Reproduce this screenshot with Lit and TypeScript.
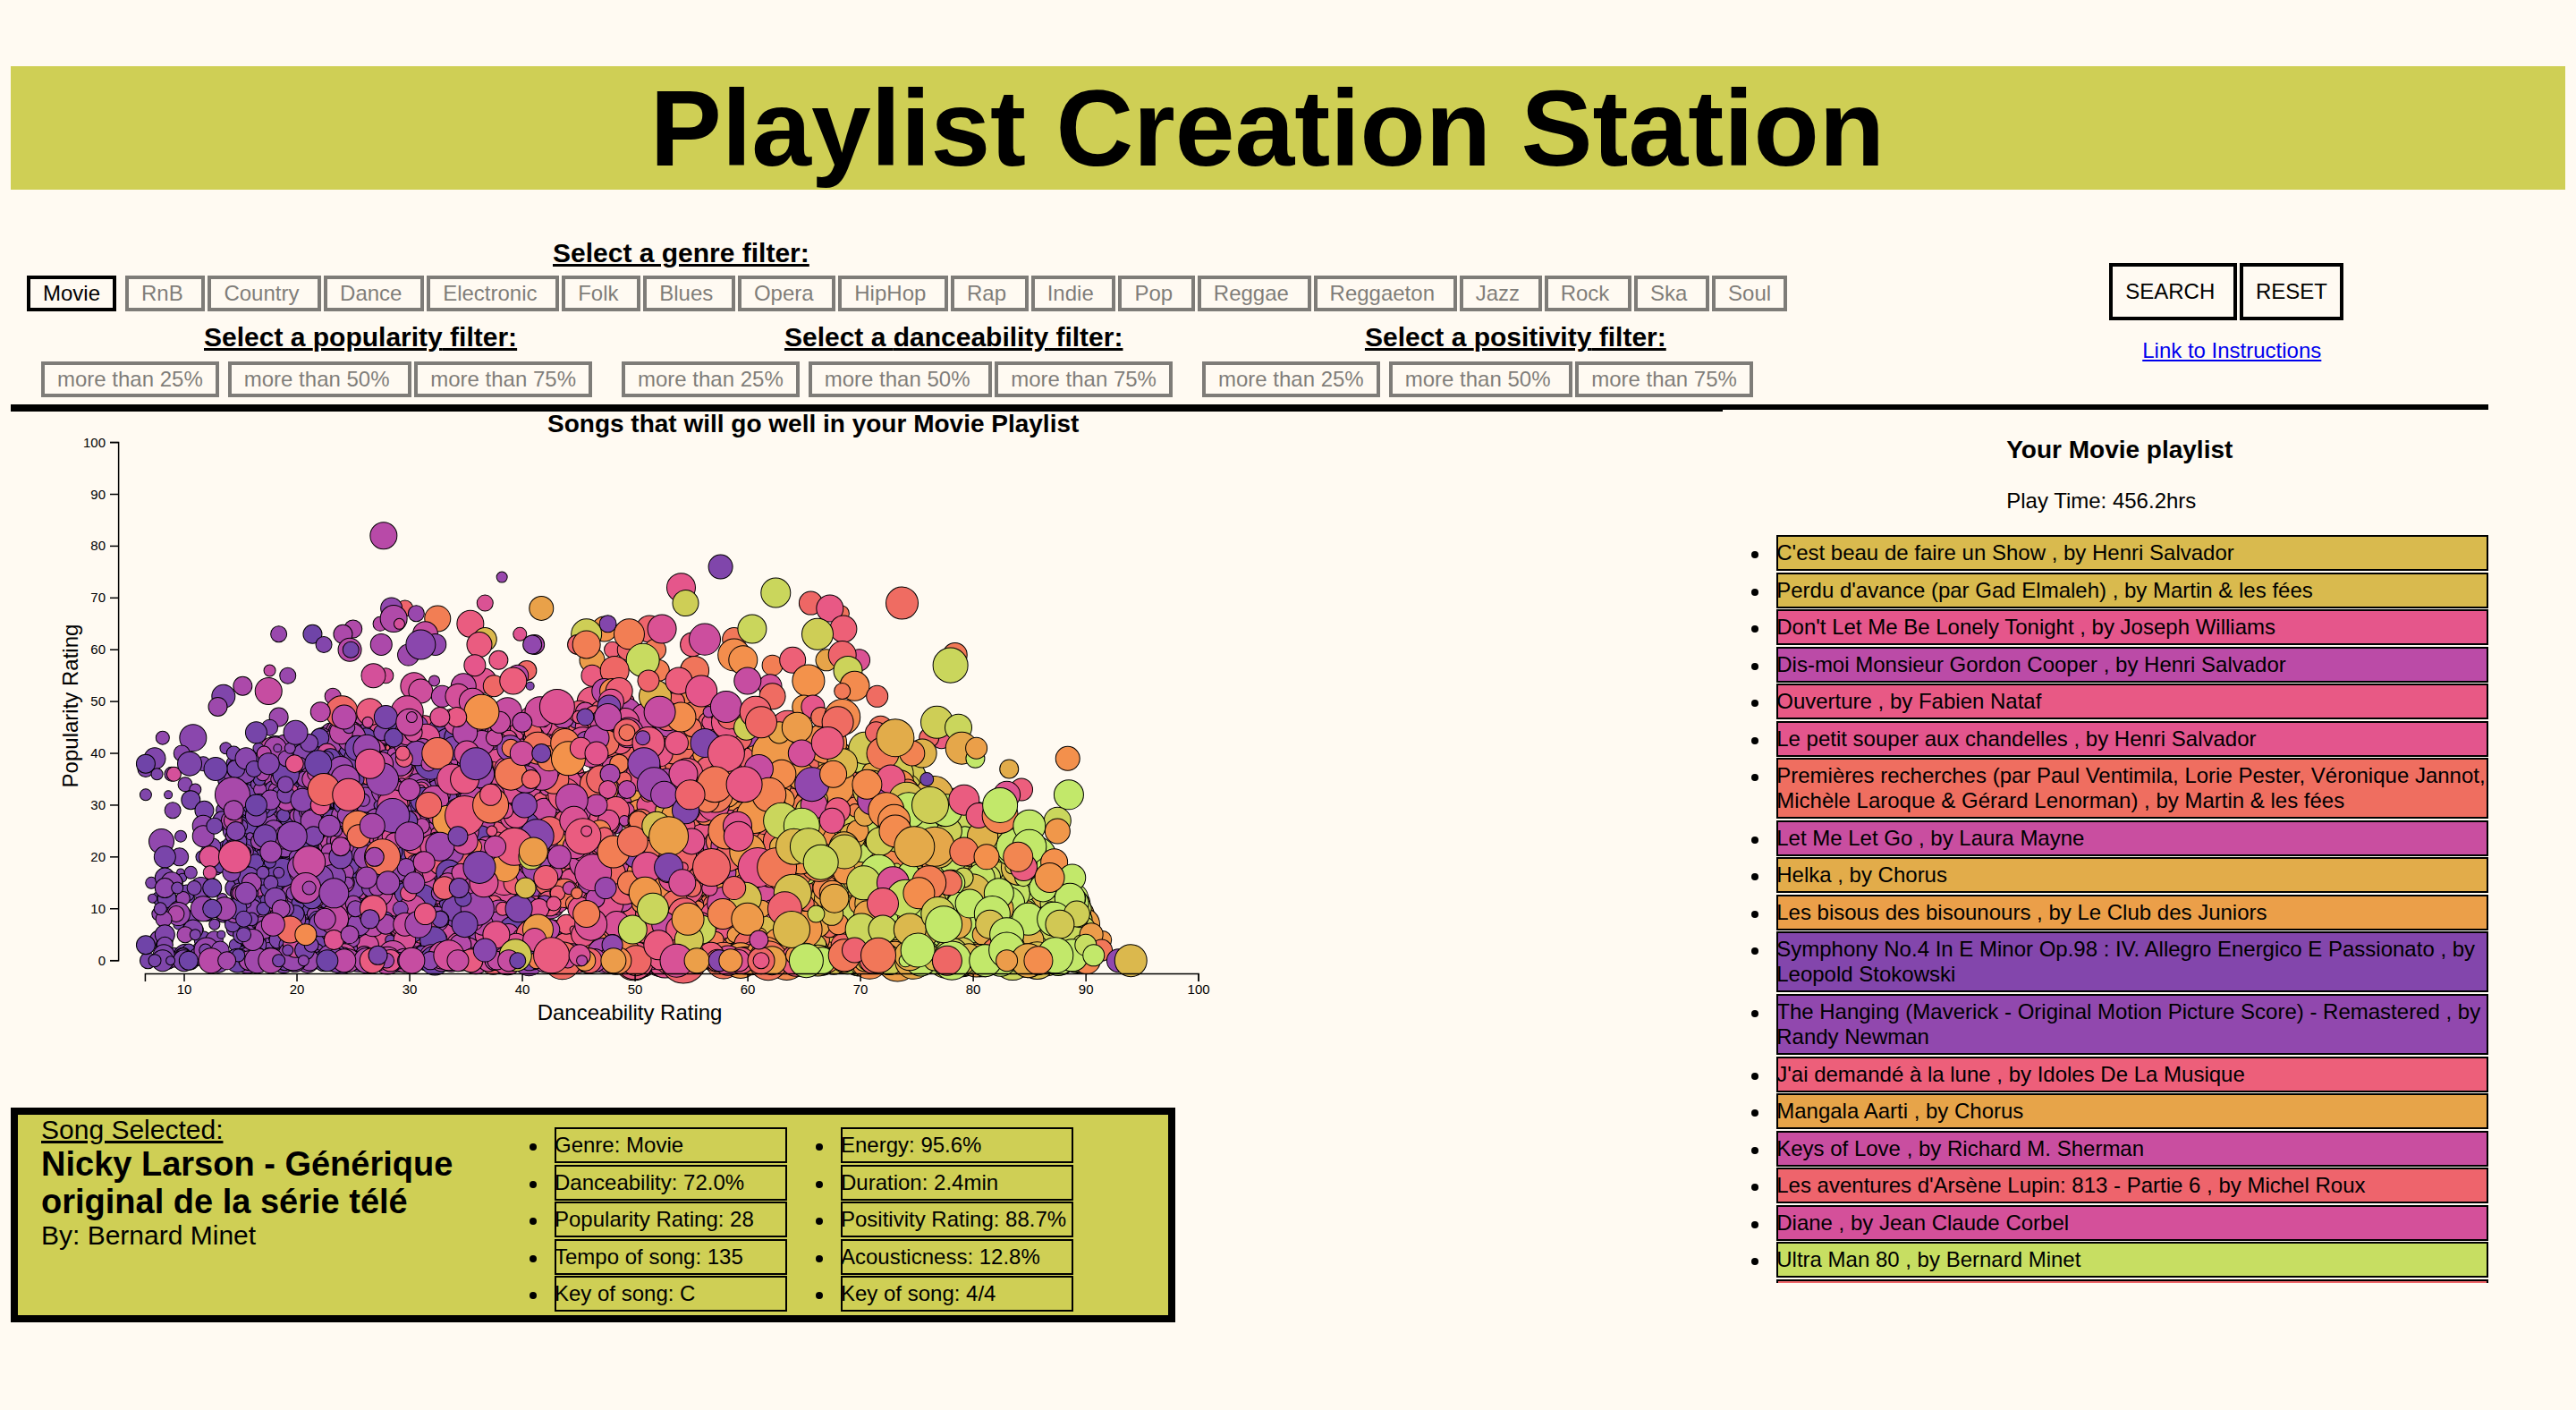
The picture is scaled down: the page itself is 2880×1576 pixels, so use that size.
import { LitElement, html, svg, css } from "lit";
import { customElement, property, state } from "lit/decorators.js";
import { classMap } from "lit/directives/class-map.js";
import { styleMap } from "lit/directives/style-map.js";

type Song = { title: string; tone: number };
type Dot = [dance: number, popularity: number, radius: number, tone: number];

const GENRES = [
  "Movie", "RnB", "Country", "Dance", "Electronic", "Folk", "Blues", "Opera", "HipHop",
  "Rap", "Indie", "Pop", "Reggae", "Reggaeton", "Jazz", "Rock", "Ska", "Soul",
];
const LEVELS = [25, 50, 75];
const RATINGS = ["popularity", "danceability", "positivity"];

const SONGS: Song[] = [
  { title: "C'est beau de faire un Show , by Henri Salvador", tone: 0.83 },
  { title: "Perdu d'avance (par Gad Elmaleh) , by Martin & les fées", tone: 0.83 },
  { title: "Don't Let Me Be Lonely Tonight , by Joseph Williams", tone: 0.38 },
  { title: "Dis-moi Monsieur Gordon Cooper , by Henri Salvador", tone: 0.21 },
  { title: "Ouverture , by Fabien Nataf", tone: 0.4 },
  { title: "Le petit souper aux chandelles , by Henri Salvador", tone: 0.37 },
  { title: "Premières recherches (par Paul Ventimila, Lorie Pester, Véronique Jannot, Michèle Laroque & Gérard Lenorman) , by Martin & les fées", tone: 0.53 },
  { title: "Let Me Let Go , by Laura Mayne", tone: 0.26 },
  { title: "Helka , by Chorus", tone: 0.78 },
  { title: "Les bisous des bisounours , by Le Club des Juniors", tone: 0.73 },
  { title: "Symphony No.4 In E Minor Op.98 : IV. Allegro Energico E Passionato , by Leopold Stokowski", tone: 0.06 },
  { title: "The Hanging (Maverick - Original Motion Picture Score) - Remastered , by Randy Newman", tone: 0.1 },
  { title: "J'ai demandé à la lune , by Idoles De La Musique", tone: 0.44 },
  { title: "Mangala Aarti , by Chorus", tone: 0.75 },
  { title: "Keys of Love , by Richard M. Sherman", tone: 0.26 },
  { title: "Les aventures d'Arsène Lupin: 813 - Partie 6 , by Michel Roux", tone: 0.48 },
  { title: "Diane , by Jean Claude Corbel", tone: 0.3 },
  { title: "Ultra Man 80 , by Bernard Minet", tone: 0.96 },
  { title: "\u00a0", tone: 0.49 },
];

const FACTS_LEFT = ["Genre: Movie", "Danceability: 72.0%", "Popularity Rating: 28", "Tempo of song: 135", "Key of song: C"];
const FACTS_RIGHT = ["Energy: 95.6%", "Duration: 2.4min", "Positivity Rating: 88.7%", "Acousticness: 12.8%", "Key of song: 4/4"];

// Colour ramp for the positivity score, from purple through pink and orange to lime.
const RAMP: [number, number, number, number][] = [
  [0, 111, 68, 168],
  [0.1, 145, 72, 174],
  [0.2, 184, 74, 168],
  [0.3, 212, 80, 154],
  [0.38, 229, 86, 139],
  [0.44, 237, 95, 122],
  [0.5, 238, 103, 101],
  [0.6, 242, 126, 84],
  [0.68, 243, 146, 75],
  [0.74, 233, 161, 73],
  [0.8, 222, 178, 75],
  [0.9, 206, 206, 86],
  [1, 194, 232, 106],
];

function toneColor(t: number): string {
  const v = Math.min(1, Math.max(0, t));
  let i = 1;
  while (i < RAMP.length - 1 && RAMP[i][0] < v) i++;
  const a = RAMP[i - 1];
  const b = RAMP[i];
  const k = (v - a[0]) / (b[0] - a[0]);
  const mix = (n: number) => Math.round(a[n] + (b[n] - a[n]) * k);
  return `rgb(${mix(1)},${mix(2)},${mix(3)})`;
}

function curve(points: [number, number][], x: number): number {
  if (x <= points[0][0]) return points[0][1];
  for (let i = 1; i < points.length; i++) {
    const [x1, y1] = points[i];
    const [x0, y0] = points[i - 1];
    if (x <= x1) return y0 + ((y1 - y0) * (x - x0)) / (x1 - x0);
  }
  return points[points.length - 1][1];
}

const CEILING: [number, number][] = [
  [6.5, 8], [9, 18], [12, 22], [13.4, 28], [14, 38], [16, 40], [20, 43], [25, 45], [30, 46], [35, 47], [42, 46], [47, 51],
  [55, 50], [60, 47], [65, 44], [70, 40], [75, 34], [80, 29], [84, 23], [88, 16], [90, 8], [91, 2],
];
const MEAN_TONE: [number, number][] = [
  [6, 0.04], [14, 0.05], [20, 0.09], [28, 0.16], [36, 0.27], [44, 0.36], [52, 0.42], [60, 0.54], [66, 0.7], [74, 0.84], [82, 0.94], [90, 0.97],
];
const MEAN_RADIUS: [number, number][] = [
  [6, 8], [12, 9], [16, 10], [22, 12], [30, 13], [40, 14], [55, 16], [70, 17], [85, 17], [91, 13],
];

// The bulk of the catalogue: a repeatable cloud of songs below the popularity ceiling.
function crowd(): Dot[] {
  let seed = 20117;
  const rnd = () => {
    seed = (seed * 1664525 + 1013904223) >>> 0;
    return seed / 4294967296;
  };
  const bell = () => (rnd() + rnd() + rnd() + rnd() - 2) * 0.9;
  const dots: Dot[] = [];
  const add = (d: number, p: number) => {
    const spread = d < 14 ? 0.08 : d < 26 ? 0.16 : 0.26;
    const tone = curve(MEAN_TONE, d) + bell() * spread;
    const radius = Math.max(4, curve(MEAN_RADIUS, d) * (0.85 + bell() * 0.5));
    dots.push([d, p, radius, Math.min(1, Math.max(0, tone))]);
  };
  for (let i = 0; i < 60; i++) {
    const d = 7.4 + rnd() * 6.4;
    add(d, Math.round(rnd() * curve(CEILING, d)));
  }
  for (let i = 0; i < 3300; i++) {
    const d = i % 5 === 0 ? 14 + rnd() * 22 : 13.8 + rnd() * 76;
    const top = curve(CEILING, d);
    add(d, Math.round(Math.pow(rnd(), 0.95) * top));
  }
  for (let i = 0; i < 380; i++) {
    add(8 + rnd() * 82, rnd() < 0.8 ? 0 : 1);
  }
  return dots;
}

const STANDOUTS: Dot[] = [
  [16.3, 28, 12, 0.06], [17.1, 24, 13, 0.03], [20.4, 31, 13, 0.08], [21.2, 27, 12, 0.13], [21.4, 24, 11, 0.05],
  [22, 30, 11, 0.38], [24.3, 28, 10, 0.13], [18.9, 34, 9, 0.06], [21, 42, 10, 0.05], [23.8, 37, 14, 0.12],
  [25.3, 41, 14, 0.03], [29.3, 40, 8, 0.42], [14.5, 37, 10, 0.02], [18.2, 41, 4.5, 0.1], [19.3, 41, 6, 0.09],
  [16.5, 41, 6, 0.04], [17, 40, 8, 0.2], [14.1, 17, 10, 0.07], [15.9, 15, 11, 0.15], [16.9, 17, 7, 0.04],
  [17.6, 15, 8, 0.04], [18, 12, 12, 0.07], [18.3, 17, 6, 0.04], [20.2, 17, 12, 0.16], [20.2, 18, 14, 0.14],
  [29.8, 13, 9, 0.38], [29.6, 18, 10, 0.12], [26, 20, 13, 0.13], [25.3, 26, 17, 0.6], [25.4, 24, 13, 0.55],
  [13.5, 10, 13, 0.15], [11.4, 14, 12, 0.06], [9.4, 9, 13, 0.12], [9.2, 9, 9, 0.18], [8.1, 8, 9, 0.12],
  [7.8, 10, 7, 0.05], [7.1, 12, 5, 0.06], [9, 15, 10, 0.2], [8.2, 5, 11, 0.05], [8.2, 3, 9, 0.06],
  [10.7, 6, 11, 0.07], [10, 5, 9, 0.15], [10.9, 5, 6, 0.05], [11.9, 2, 14, 0.12], [13.1, 2, 10, 0.1],
  [11.8, 2, 7, 0.04], [8.1, 1, 12, 0.05], [12.6, 7, 6, 0.06], [13.2, 5, 4.5, 0.04], [9.9, 0, 12, 0.04],
  [12.3, 0, 14, 0.2], [16.4, 0, 14, 0.14], [16, 4, 12, 0.14], [15.2, 5, 8, 0.04], [19.6, 1, 17, 0.12],
  [19.8, 3, 14, 0.28], [20.6, 2, 11, 0.03], [19.1, 2, 6, 0.05], [21.2, 3, 8, 0.06], [23.2, 4, 11, 0.35],
  [24.6, 5, 10, 0.15], [25.1, 10, 9, 0.1], [27.8, 7, 11, 0.16], [29.1, 10, 8.5, 0.07], [29.5, 7, 13, 0.25],
  [27.6, 82, 15, 0.2], [38.1, 74, 6, 0.12], [36.6, 69, 9, 0.33], [41.6, 68, 13.5, 0.74], [29.5, 68, 9, 0.48],
  [28.3, 68, 12, 0.1], [30.5, 67, 9, 0.12], [27.3, 65, 8, 0.2], [28.5, 66, 15, 0.18], [29, 65, 6, 0.3],
  [32.4, 66, 14.5, 0.6], [35.3, 65, 15, 0.42], [24.9, 64, 10, 0.18], [31.3, 63, 14, 0.25], [18.3, 63, 9, 0.12],
  [21.3, 63, 10.5, 0], [24, 63, 10.5, 0.17], [39.7, 63, 7.5, 0.35], [36.6, 62, 13, 0.82], [22.3, 61, 9, 0.06],
  [24.6, 60, 13, 0.2], [24.7, 60, 9, 0.02], [27.4, 61, 12, 0.17], [32.2, 61, 12, 0.1], [29.8, 59, 12, 0.13],
  [30.9, 61, 16.5, 0.08], [36.1, 61, 14, 0.42], [41, 61, 11, 0.17], [40.8, 61, 10.5, 0.1], [37.8, 58, 10.5, 0.4],
  [36.5, 54, 14, 0.35], [35.7, 57, 12, 0.38], [17.5, 56, 6.5, 0.23], [40.3, 56, 11, 0.5], [39.5, 55, 12, 0.2],
  [37.4, 53, 12, 0.5], [39.1, 54, 15, 0.43], [19.1, 55, 9, 0.12], [27.8, 55, 8.5, 0.3], [26.7, 55, 13.5, 0.3],
  [15.1, 53, 10.5, 0.17], [17.4, 52, 15, 0.25], [13.4, 51, 13, 0.05], [12.9, 49, 10.5, 0.13], [30.3, 53, 15, 0.3],
  [30.9, 52, 13.5, 0.28], [32.1, 54, 6, 0.16], [32.8, 51, 12, 0.2], [34.7, 53, 14, 0.23], [34.2, 51, 14, 0.3],
  [35.5, 50, 15, 0.28], [40.6, 53, 4.5, 0.05], [23.1, 51, 9, 0.2], [38.6, 48, 16, 0.25], [41.5, 48, 17, 0.28],
  [43, 49, 19.5, 0.34], [37.9, 46, 12, 0.25], [36.3, 48, 19.5, 0.68], [18.3, 47, 10.5, 0.13], [23.9, 48, 18, 0.5],
  [22, 48, 11, 0.2], [24.1, 47, 13.5, 0.2], [26.4, 48, 15, 0.42], [29.7, 48, 18, 0.3], [27.8, 47, 13, 0.03],
  [26.2, 46, 6, 0.3], [29.9, 46, 15, 0.25], [30.1, 47, 6, 0.22], [34.1, 47, 11, 0.4], [32.6, 47, 11, 0.35],
  [45.5, 47, 9.5, 0.02], [39.9, 46, 11, 0.2], [17.5, 45, 9, 0.05], [16.3, 44, 12, 0.02], [19.8, 44, 13.5, 0.06],
  [8, 43, 7.5, 0.1], [10.7, 43, 15, 0.08], [13.6, 41, 6.5, 0.06], [14.3, 40, 8, 0.03], [15.4, 39, 12, 0.08],
  [7.3, 39, 12, 0.05], [6.5, 37, 9, 0.05], [6.5, 38, 10.5, 0], [7.5, 36, 6.5, 0.04], [8.8, 36, 8, 0.1],
  [9, 36, 8, 0.3], [9.7, 40, 9, 0.08], [11.6, 38, 8, 0.05], [10.4, 38, 13.5, 0.04], [12.7, 37, 13, 0.01],
  [6.5, 32, 6.5, 0.05], [8.5, 32, 4.5, 0.06], [10, 34, 8, 0.07], [10.9, 33, 6.5, 0.08], [10.5, 31, 10.5, 0.02],
  [8.9, 29, 9, 0.07], [11.7, 29, 10.5, 0.03], [16.1, 37, 9, 0.02], [17.4, 38, 12, 0.06], [14.2, 32, 19.5, 0.16],
  [16.3, 30, 12, 0], [14.3, 29, 11, 0.15], [7.9, 23, 14, 0.1], [9.6, 24, 6.5, 0.05], [11.6, 26, 12, 0.1],
  [11.6, 24, 12, 0.12], [12.6, 26, 9, 0.02], [14.5, 25, 10.5, 0.06], [9.5, 20, 10, 0.06], [8.2, 20, 12, 0.03],
  [12.2, 20, 12, 0.35], [14.4, 20, 18, 0.38], [12.2, 17, 7.5, 0.33], [10.5, 17, 7, 0.06], [7, 15, 6.5, 0.05],
  [8.2, 16, 11, 0.04], [8.8, 15, 12, 0.1], [8.2, 14, 11, 0.1], [9.3, 14, 6.5, 0.04], [10.8, 14, 8, 0.04],
  [19.7, 38, 10, 0.38], [21.8, 38, 15, 0], [26.1, 41, 15, 0.12], [24.2, 35, 16, 0.15], [27.5, 35, 18, 0.12],
  [26.4, 38, 16.5, 0.38], [22.3, 33, 18, 0.5], [24.5, 32, 18, 0.45], [29.9, 33, 12, 0.2], [32.4, 40, 17.5, 0.55],
  [33.7, 35, 17, 0.35], [34.8, 35, 16, 0.4], [35.8, 38, 18, 0.05], [38.9, 36, 18, 0.58], [40.7, 35, 10.5, 0.48],
  [38.9, 41, 10, 0.58], [41.3, 41, 18, 0.55], [42.3, 39, 14, 0.6], [39.9, 40, 13.5, 0.28], [43.7, 42, 16, 0.6],
  [44, 39, 19, 0.68], [41.6, 40, 10.5, 0.03], [46.5, 43, 14, 0.2], [45.1, 41, 12, 0.4], [46.5, 40, 13, 0.37],
  [48.5, 38, 10.5, 0.6], [47.7, 36, 11, 0.16], [47.5, 33, 10, 0.33], [49.2, 33, 10, 0.2], [46.5, 30, 12, 0.23],
  [28.4, 28, 19, 0.1], [26.6, 26, 14, 0.16], [33.3, 27, 17, 0.7], [34.8, 28, 22, 0.42], [31.6, 30, 14.5, 0.5],
  [37.1, 30, 20, 0.58], [37.1, 32, 12, 0.42], [40.1, 30, 14, 0.08], [44.3, 31, 18, 0.22], [44.5, 27, 16, 0.33],
  [29.9, 24, 16, 0.15], [19.5, 24, 16.5, 0.1], [22.8, 26, 12, 0.12], [17.6, 21, 12, 0.14], [32.6, 22, 16, 0.14],
  [34.2, 24, 11, 0.04], [38.4, 18, 16, 0.7], [36.5, 15, 16, 0.33], [36.1, 18, 18, 0.06], [41.2, 24, 19, 0.07],
  [39.2, 22, 21, 0.42], [37.5, 22, 12, 0.25], [40.7, 20, 14, 0.9], [40.9, 21, 16, 0.72], [43.2, 20, 13, 0.2],
  [45.3, 24, 20, 0.42], [45.6, 25, 6, 0.38], [46.2, 17, 20.5, 0.28], [48, 21, 18, 0.6], [47.3, 14, 12, 0.12],
  [49.4, 15, 13, 0.6], [27.5, 20, 20, 0.55], [26.8, 20, 10.5, 0.15], [23.8, 20, 13, 0.04], [23.8, 22, 10.5, 0.2],
  [21, 19, 18, 0.26], [20.7, 14, 17, 0.22], [21, 14, 7.5, 0.15], [23.2, 13, 16.5, 0.12], [26.1, 16, 12, 0.14],
  [28, 15, 13, 0.13], [30.3, 15, 12, 0.13], [31.2, 19, 12, 0.23], [34.3, 14, 11, 0.04], [26.7, 10, 15, 0.42],
  [18.5, 10, 10, 0.15], [19.3, 6, 15, 0.52], [20.7, 5, 12, 0.65], [17.8, 7, 13, 0.2], [22.4, 8, 12, 0.18],
  [26.4, 8, 10.5, 0.07], [30.7, 7, 15, 0.15], [31.3, 9, 12, 0.4], [39.6, 10, 15, 0.05], [34.8, 7, 14.5, 0.03],
  [37.6, 5, 15, 0.38], [36.6, 2, 13, 0.08], [40.2, 14, 11.5, 0.83], [42, 16, 13.5, 0.45], [42.7, 11, 8, 0.38],
  [46, 7, 18, 0.32], [45.6, 9, 15, 0.6], [41.3, 6, 17, 0.72], [41, 4, 13, 0.33], [33.4, 1, 17, 0.3],
  [30.1, 0, 14.5, 0.25], [34.2, 0, 12, 0.25], [39.3, 1, 18, 0.88], [38.7, 0, 12, 0.25], [39.5, 0, 9, 0],
  [42.5, 1, 20, 0.42], [45, 1, 12, 0.32], [45.2, 0, 6, 0.2], [26.6, 0, 14, 0.42], [27.1, 1, 10.5, 0.04],
  [24.1, 0, 13, 0.22], [22.6, 0, 12, 0], [20.5, 0, 6, 0.1], [17.6, 0, 14, 0.18], [18.3, 0, 7, 0.03],
  [13.7, 0, 10, 0.15], [10.3, 0, 10.5, 0], [8, 0, 12, 0.05], [8.7, 0, 5, 0.03], [6.7, 0, 9, 0.03],
  [7.3, 0, 7, 0.03], [6.5, 3, 10.5, 0], [11.6, 10, 14, 0.12], [12.4, 10, 10.5, 0], [12.4, 14, 10.5, 0],
  [15.4, 13, 12, 0.1], [15.2, 8, 9, 0.02], [50, 0, 17, 0.5], [48.4, 0, 15, 0.65], [47.9, 3, 11.5, 0.1],
  [48, 0, 14, 0.72],
  [47.2, 64, 14, 0.68], [47.5, 65, 9.5, 0.06], [46.1, 58, 14, 0.72], [46.1, 55, 12, 0.42], [45.6, 63, 17, 0.9],
  [44.8, 61, 11, 0.48], [45.6, 61, 15.5, 0.6], [47.9, 60, 9, 0.45], [49.3, 60, 12, 0.48], [51.2, 64, 15, 0.48],
  [51.7, 60, 12, 0.58], [49.4, 63, 17, 0.6], [52.3, 64, 16, 0.33], [52, 56, 12, 0.6], [51.7, 51, 18, 0.8],
  [50.6, 58, 18.5, 0.95], [48.1, 56, 16, 0.5], [47.2, 52, 14, 0.2], [47.9, 52, 14, 0.65], [48.5, 52, 15, 0.45],
  [47.8, 50, 14, 0.35], [47.6, 49, 13, 0.04], [47.5, 47, 15, 0.22], [51.1, 54, 12, 0.48],
  [54, 72, 16, 0.38], [54.4, 69, 14.5, 0.9], [57.5, 76, 13.5, 0.05], [62.4, 71, 16.5, 0.93], [65.5, 69, 13, 0.5],
  [68.2, 67, 9, 0.55], [67.2, 68, 15, 0.4], [73.6, 69, 18, 0.52], [55, 61, 13.5, 0.43], [56.1, 62, 17.5, 0.27],
  [58.7, 62, 13, 0.57], [60.3, 64, 16, 0.93], [58.7, 59, 18, 0.66], [59.5, 58, 16, 0.67], [68.4, 64, 15, 0.45],
  [66.9, 58, 12, 0.75], [66.1, 63, 17.5, 0.9], [69.8, 58, 12, 0.33], [68.3, 59, 15.5, 0.48], [68.8, 56, 16, 0.92],
  [62.1, 57, 11.5, 0.6], [63.9, 58, 14.5, 0.45], [65.3, 54, 18, 0.68], [69.4, 53, 16.5, 0.65], [68.3, 52, 9, 0.58],
  [71.4, 51, 12, 0.52], [78.3, 59, 13.5, 0.58], [77.9, 57, 19.5, 0.93], [61.9, 53, 13, 0.3], [59.9, 54, 15, 0.25],
  [62.1, 51, 14.5, 0.52], [55.2, 56, 16, 0.56], [53.8, 54, 15, 0.43], [55.8, 52, 17.5, 0.38], [58, 49, 17.5, 0.24],
  [54, 47, 16.5, 0.66], [52.1, 48, 17.5, 0.25], [59.8, 45, 14, 0.9], [60.6, 48, 17.5, 0.47], [61.1, 46, 17.5, 0.5],
  [64.9, 49, 13, 0.7], [65.7, 49, 13, 0.38], [66.4, 47, 11, 0.55], [68.3, 47, 20, 0.65], [67.9, 46, 17.5, 0.52],
  [64.3, 45, 17, 0.72], [64.7, 40, 15, 0.3], [70.3, 41, 18, 0.88], [68.3, 38, 17, 0.82], [67, 42, 18, 0.42],
  [71.7, 45, 13, 0.55], [71.3, 44, 12, 0.5], [77.1, 43, 12, 0.42], [76, 43, 11, 0.5], [76.7, 46, 18, 0.9],
  [78.6, 45, 15, 0.93], [71.9, 40, 18, 0.58], [75.4, 40, 16, 0.8], [74.5, 40, 14, 0.62], [73, 43, 21, 0.78],
  [78.9, 41, 18, 0.76], [80.1, 39, 10.5, 1], [80.2, 41, 12, 0.73], [83.1, 37, 10.5, 0.78], [88.3, 39, 13.5, 0.67],
  [88.4, 32, 16.5, 1], [87.4, 27, 15, 0.93], [87.4, 25, 14, 0.7], [75.8, 35, 7.5, 0], [49.2, 44, 15, 0.48],
  [49.2, 44, 9, 0.55], [51.1, 42, 18, 0.42], [50.6, 43, 8, 0.08], [56.1, 42, 16, 0.05], [58, 40, 20.5, 0.42],
  [53.6, 42, 13, 0.4], [54.2, 36, 16, 0.34], [50.7, 38, 18, 0.1], [51.6, 34, 19, 0.13], [54.4, 29, 15, 0.05],
  [52.5, 32, 15, 0.15], [57, 34, 20, 0.57], [54.8, 32, 16.5, 0.48], [60.9, 37, 16, 0.25], [61.8, 32, 19, 0.62],
  [59.6, 34, 20, 0.4], [65.8, 30, 15, 0.3], [65.6, 34, 19, 0.1], [67.5, 36, 15, 0.65], [71, 31, 17, 0.18],
  [72.6, 35, 16, 0.4], [70.5, 34, 16.5, 0.65], [67.9, 29, 14, 0.42], [67.4, 27, 14, 0.38], [74, 31, 20, 0.85],
  [74.2, 29, 20, 1], [72.2, 29, 20, 0.66], [72.9, 27, 18, 0.66], [77.5, 29, 18, 1], [76.1, 30, 20.5, 0.9],
  [79.1, 31, 17, 0.42], [80.4, 28, 14, 0.42], [84.2, 33, 12.5, 0.43], [82.9, 32, 15, 0.35], [82.3, 28, 20, 0.62],
  [82.3, 30, 19.5, 1], [84.9, 26, 18, 1], [84.9, 22, 19, 1], [58, 25, 20, 0.62], [59.9, 21, 20, 0.72],
  [49.7, 23, 17, 0.55], [51.8, 26, 16, 0.85], [52.9, 24, 22, 0.73], [51, 18, 17, 0.36], [52.9, 18, 16, 0.05],
  [60.8, 18, 22, 0.38], [56.7, 18, 21, 0.49], [59, 26, 16, 0.35], [59.1, 24, 16.5, 0.38], [62.5, 18, 22, 0.58],
  [62.9, 27, 20, 0.93], [64.7, 26, 20, 0.97], [64, 22, 20, 0.82], [65.3, 22, 20.5, 0.9], [68.5, 21, 19, 0.88],
  [66.4, 19, 19.5, 0.94], [73, 25, 18, 0.65], [76.5, 22, 22, 0.76], [74.7, 22, 22.5, 0.77], [79.1, 21, 16, 0.58],
  [81.1, 20, 14, 0.67], [84.4, 18, 15, 0.42], [83.9, 20, 16.5, 0.63], [87.1, 19, 15, 0.67], [88.7, 16, 15, 1],
  [88.5, 12, 17, 1], [86.7, 16, 16.5, 0.69], [82.2, 13, 16.5, 1], [71.5, 17, 20, 1], [70.2, 15, 19, 0.93],
  [72.8, 15, 18, 0.33], [73.9, 12, 21, 0.96], [77.8, 15, 14, 0.55], [76, 15, 19, 0.6], [75.1, 13, 17.5, 0.66],
  [71.9, 11, 17.5, 0.45], [67.6, 12, 16, 0.77], [63.9, 13, 21, 0.85], [63.2, 10, 19, 0.47], [63.8, 6, 20.5, 0.82],
  [59.7, 12, 18, 0.85], [55.8, 6, 16, 0.93], [54.7, 4, 16, 0.88], [57.7, 9, 17, 0.63], [59.9, 8, 18, 0.71],
  [58.7, 14, 13, 0.49], [50.8, 13, 18, 0.7], [54.1, 15, 15, 0.32], [49.7, 6, 16, 0.95], [51.5, 10, 17.5, 0.93],
  [54.6, 8, 18, 0.71], [52, 3, 16.5, 0.42], [53.6, 0, 18.5, 0.32], [55.4, 0, 14, 0.73], [57.4, 0, 12, 0.07],
  [58.4, 0, 13, 0.7], [61.1, 0, 15, 0.5], [61.1, 0, 9, 0.4], [60.9, 4, 10.5, 0.27], [70, 6, 18, 0.93],
  [71.9, 6, 16, 0.92], [74.3, 6, 18, 0.82], [66.5, 0, 15, 1], [65.1, 0, 19, 1], [68.5, 1, 18, 0.57],
  [69.4, 2, 14, 0.47], [71.5, 1, 19.5, 0.57], [76.8, 9, 19, 0.9], [78.5, 7, 16, 0.78], [77.3, 7, 20.5, 1],
  [75, 2, 19, 1], [77.6, 0, 16.5, 0.5], [79.6, 11, 16, 1], [81.6, 9, 20, 1], [81.4, 7, 16, 0.85],
  [84.8, 8, 18, 1], [87.1, 8, 19, 1], [89.1, 9, 14.5, 0.9], [87.6, 7, 16, 0.88], [81, 0, 18, 1],
  [82.9, 5, 19, 1], [82.9, 2, 20, 1], [90, 0, 15, 0.64], [88.7, 1, 18, 1], [87.2, 1, 20, 1],
  [84.8, 0, 19, 0.76], [82.9, 0, 12, 0.72], [85.7, 0, 16, 0.66], [91.4, 4, 10, 0.7], [90.4, 5, 13, 0.72],
  [91.3, 2, 12, 0.57], [89.9, 3, 12, 0.96], [90.6, 1, 12, 1], [92.8, 0, 13, 0.1], [93.9, 0, 18, 0.82],
];

const xOf = (dance: number) => 68 + dance * 12.6;
const yOf = (popularity: number) => 585.6 - popularity * 5.79;

@customElement("song-scatter")
class SongScatter extends LitElement {
  static styles = css`
    :host {
      display: block;
    }
    .plot {
      display: block;
      width: 100%;
      height: auto;
      overflow: visible;
      font-family: "Liberation Sans", Helvetica, Arial, sans-serif;
    }
    .dot {
      stroke: #000;
      stroke-width: 1;
    }
    .axis {
      fill: none;
      stroke: #000;
      stroke-width: 1.5;
    }
    .tick {
      font-size: 15px;
    }
    .name {
      font-size: 24px;
    }
    .middle {
      text-anchor: middle;
    }
    .end {
      text-anchor: end;
    }
  `;

  private dots = [...crowd(), ...STANDOUTS];

  render() {
    const ups = Array.from({ length: 11 }, (_, i) => i * 10);
    const acrosses = Array.from({ length: 10 }, (_, i) => 10 + i * 10);
    return html`
      <svg class="plot" viewBox="0 0 1914 750" role="img" aria-label="Popularity Rating by Danceability Rating">
        ${this.dots.map(
          ([d, p, r, t]) => svg`<circle class="dot" cx=${(xOf(d) + 1).toFixed(1)} cy=${yOf(p).toFixed(1)} r=${r.toFixed(1)} fill=${toneColor(t)}></circle>`
        )}
        <path class="axis" d="M111 6.6H120.6V585.6H111"></path>
        ${ups.map(
          (v) => svg`
            <path class="axis" d=${`M111 ${yOf(v)}H120.6`}></path>
            <text class="tick end" x="106" y=${yOf(v) + 5}>${v}</text>`
        )}
        <path class="axis" d="M150.4 609V600.4H1328V609"></path>
        ${acrosses.map(
          (v) => svg`
            <path class="axis" d=${`M${xOf(v)} 600.4V609`}></path>
            <text class="tick middle" x=${xOf(v)} y="623">${v}</text>`
        )}
        <text class="name middle" x="692" y="652">Danceability Rating</text>
        <text class="name middle" transform="translate(75 301) rotate(-90)">Popularity Rating</text>
      </svg>
    `;
  }
}

const boxedItem = css`
  .boxed {
    padding: 6px 0;
    outline: 2px solid #000;
    outline-offset: -2px;
    list-style: none;
  }
  .boxed::before {
    content: "";
    float: left;
    width: 8px;
    height: 8px;
    margin: 12px 20px 0 -28px;
    border-radius: 50%;
    background: #000;
  }
`;

@customElement("fact-list")
class FactList extends LitElement {
  @property({ attribute: false }) facts: string[] = [];

  static styles = [
    boxedItem,
    css`
      :host {
        display: block;
        width: 260px;
      }
      .facts {
        display: flex;
        flex-direction: column;
        justify-content: space-between;
        height: 206px;
        margin: 0;
        padding: 0;
      }
    `,
  ];

  render() {
    return html`<ul class="facts">${this.facts.map((f) => html`<li class="boxed">${f}</li>`)}</ul>`;
  }
}

@customElement("app-root")
class AppRoot extends LitElement {
  @state() private genre = "Movie";
  @state() private levels: Record<string, number> = {};

  static styles = [
    boxedItem,
    css`
      :host {
        display: block;
        box-sizing: border-box;
        min-height: 100vh;
        padding: 74px 12px 40px;
        background: #fffaf2;
        color: #000;
        font-family: "Liberation Sans", Helvetica, Arial, sans-serif;
        font-size: 24px;
        line-height: 28px;
      }
      .banner {
        margin: 0;
        padding-right: 46px;
        background: #cfcf55;
        font-size: 120px;
        line-height: 138px;
        text-align: center;
      }
      .page {
        margin-right: 3%;
      }
      .split {
        display: grid;
        grid-template-columns: minmax(0, 1914fr) minmax(0, 856fr);
      }
      .controls {
        border-bottom: 6px solid #000;
      }
      .filters {
        padding: 54px 0 8px;
      }
      .heading {
        margin: 0 0 8px;
        font-size: 30px;
        line-height: 34px;
        text-decoration: underline;
      }
      .genre-heading {
        padding-left: 606px;
      }
      .row {
        display: flex;
        gap: 3px;
      }
      .genres {
        margin-bottom: 12px;
        padding-left: 18px;
      }
      .ratings {
        display: flex;
        gap: 33px;
        padding-left: 34px;
      }
      .rating-heading {
        margin-bottom: 10px;
        padding-left: 182px;
      }
      .choice {
        box-sizing: border-box;
        flex: none;
        height: 40px;
        margin: 0;
        padding: 0 14px;
        border: 4px solid #000;
        border-radius: 0;
        background: none;
        color: #000;
        font: inherit;
        white-space: pre;
        opacity: 0.5;
        cursor: pointer;
      }
      .choice:first-child {
        margin-right: 7px;
      }
      .active {
        opacity: 1;
      }
      .actions {
        padding: 82px 0 0 432px;
      }
      .action,
      .action:first-child {
        height: 64px;
        margin: 0;
        opacity: 1;
      }
      .help {
        display: inline-block;
        margin: 20px 0 0 37px;
        color: #0000ee;
      }
      .chart {
        border-top: 2px solid #000;
      }
      .subtitle {
        margin: 0;
        font-size: 28px;
        line-height: 28px;
      }
      .chart-title {
        padding-left: 600px;
      }
      .selected {
        display: flex;
        box-sizing: border-box;
        width: 68%;
        padding-left: 26px;
        border: 8px solid #000;
        background: #cfcf55;
      }
      .song {
        flex: 0 0 574px;
        box-sizing: border-box;
        padding-right: 60px;
        font-size: 30px;
        line-height: 34px;
      }
      .label {
        margin: 0;
        text-decoration: underline;
      }
      .song-title {
        margin: 0;
        font-size: 38px;
        line-height: 42px;
      }
      .artist {
        margin: 0;
      }
      .details {
        display: flex;
        gap: 60px;
        padding: 14px 0 4px;
      }
      .playlist-title {
        padding: 31px 0 0 317px;
      }
      .time {
        margin: 0;
        padding: 29px 0 24px 317px;
      }
      .scroller {
        max-height: 836px;
        padding-left: 60px;
        overflow-y: auto;
        scrollbar-width: none;
      }
      .songs {
        display: flex;
        flex-direction: column;
        justify-content: space-between;
        min-height: 872px;
        margin: 0;
        padding: 0;
      }
    `,
  ];

  private choice(label: string, active: boolean, pick: () => void) {
    return html`<button type="button" class=${classMap({ choice: true, active })} aria-pressed=${active ? "true" : "false"} @click=${pick}>${label}</button>`;
  }

  private reset() {
    this.genre = "Movie";
    this.levels = {};
  }

  render() {
    return html`
      <header><h1 class="banner">Playlist Creation Station</h1></header>
      <main class="page">
        <div class="split controls">
          <section class="filters">
            <h2 class="heading genre-heading" id="genre">Select a genre filter:</h2>
            <div class="row genres" role="group" aria-labelledby="genre">
              ${GENRES.map((g, i) =>
                this.choice(i === 0 || i === GENRES.length - 1 ? g : g + " ", g === this.genre, () => (this.genre = g))
              )}
            </div>
            <div class="ratings">
              ${RATINGS.map(
                (r) => html`
                  <div role="group" aria-labelledby=${r}>
                    <h2 class="heading rating-heading" id=${r}>Select a ${r} filter:</h2>
                    <div class="row">
                      ${LEVELS.map((n) =>
                        this.choice(`more than ${n}%${n === 50 ? " " : ""}`, this.levels[r] === n, () => (this.levels = { ...this.levels, [r]: n }))
                      )}
                    </div>
                  </div>
                `
              )}
            </div>
          </section>
          <section class="actions">
            <div class="row">
              <button type="button" class="choice action">${"SEARCH "}</button>
              <button type="button" class="choice action" @click=${this.reset}>RESET</button>
            </div>
            <a class="help" href="#instructions">Link to Instructions</a>
          </section>
        </div>
        <div class="split">
          <div>
            <section class="chart">
              <h2 class="subtitle chart-title">Songs that will go well in your Movie Playlist</h2>
              <song-scatter></song-scatter>
            </section>
            <section class="selected">
              <div class="song">
                <p class="label">Song Selected:</p>
                <h2 class="song-title">Nicky Larson - Générique original de la série télé</h2>
                <p class="artist">By: Bernard Minet</p>
              </div>
              <div class="details">
                <fact-list .facts=${FACTS_LEFT}></fact-list>
                <fact-list .facts=${FACTS_RIGHT}></fact-list>
              </div>
            </section>
          </div>
          <section>
            <h2 class="subtitle playlist-title">Your Movie playlist</h2>
            <p class="time">Play Time: 456.2hrs</p>
            <div class="scroller">
              <ul class="songs">
                ${SONGS.map((s) => html`<li class="boxed" style=${styleMap({ backgroundColor: toneColor(s.tone) })}>${s.title}</li>`)}
              </ul>
            </div>
          </section>
        </div>
      </main>
    `;
  }
}
